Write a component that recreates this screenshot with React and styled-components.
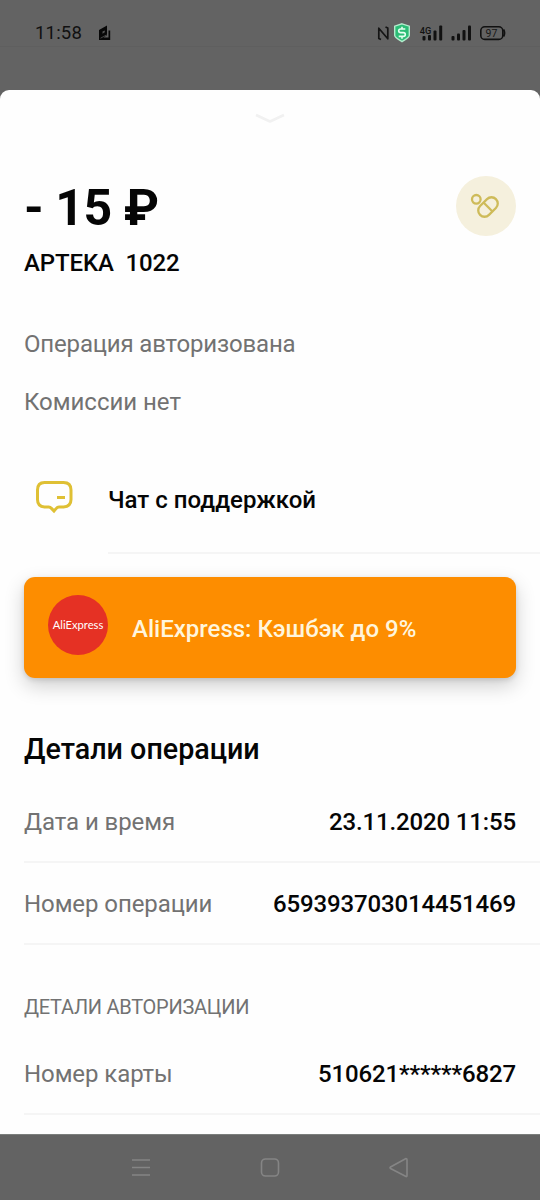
import React from "react";
import styled, { createGlobalStyle } from "styled-components";

const Global = createGlobalStyle`
  * { box-sizing: border-box; }
  body { margin: 0; background: #636363; }
`;

const Screen = styled.div`
  width: 540px;
  height: 1200px;
  display: flex;
  flex-direction: column;
  overflow: hidden;
  background: #636363;
  font-family: Roboto, "Noto Sans", sans-serif;
  color: #050505;
`;

const StatusBar = styled.header`
  height: 47px;
  margin-bottom: 43px;
  padding: 19px 34px 0 35px;
  display: flex;
  align-items: flex-start;
  justify-content: space-between;
  border-bottom: 1px solid #5f5f5f;
`;

const StatusGroup = styled.div`
  display: flex;
  align-items: center;
  height: 28px;
  gap: 16px;
`;

const Clock = styled.span`
  font-size: 18.5px;
  letter-spacing: 0.2px;
  line-height: 28px;
  color: #111;
`;

const Sheet = styled.main`
  height: 1044px;
  flex: none;
  display: flex;
  flex-direction: column;
  background: #fefefe;
  border-radius: 9px 9px 0 0;
`;

const Handle = styled.div`
  height: 86px;
  padding-top: 22px;
  display: flex;
  justify-content: center;
  align-items: flex-start;
`;

const Summary = styled.section`
  height: 152px;
  padding: 0 24px;
  display: flex;
  justify-content: space-between;
`;

const Amount = styled.h1`
  margin: 2px 0 9px;
  font-size: 50px;
  line-height: 60px;
  font-weight: 700;
  letter-spacing: -0.45px;
`;

const Merchant = styled.div`
  font-size: 24px;
  line-height: 32px;
  font-weight: 500;
  letter-spacing: -0.12px;
  white-space: pre;
`;

const CategoryBadge = styled.div`
  width: 60px;
  height: 60px;
  border-radius: 50%;
  background: #f5f0dd;
  display: flex;
  align-items: center;
  justify-content: center;
`;

const Note = styled.p`
  margin: 0 24px 26px;
  font-size: 24px;
  line-height: 32px;
  letter-spacing: ${({ $spacing }) => $spacing || 0}px;
  color: #727272;
`;

const SupportRow = styled.div`
  height: 110px;
  display: flex;
  align-items: flex-start;
`;

const SupportIcon = styled.div`
  width: 108px;
  padding: 35px 0 0 34px;
`;

const SupportLabel = styled.div`
  flex: 1;
  height: 110px;
  padding-top: 40px;
  font-size: 24px;
  line-height: 32px;
  font-weight: 500;
  border-bottom: 2px solid #f5f5f5;
`;

const Banner = styled.section`
  height: 101px;
  margin: 23.4px 24px 50.6px;
  padding: 18px 24px;
  display: flex;
  align-items: flex-start;
  gap: 24px;
  border-radius: 11px;
  background: #fd8d00;
  box-shadow: 0 8px 20px rgba(0, 0, 0, 0.19), 0 2px 5px rgba(0, 0, 0, 0.12);
`;

const BrandLogo = styled.div`
  width: 60px;
  height: 60px;
  border-radius: 50%;
  background: #e53124;
  color: #fff;
  font-family: Lato, sans-serif;
  font-size: 11.2px;
  line-height: 60px;
  text-align: center;
`;

const BannerText = styled.div`
  padding-top: 18px;
  font-size: 24px;
  line-height: 32px;
  font-weight: 500;
  color: #fff5dc;
`;

const SectionTitle = styled.h2`
  margin: 0 24px 14px;
  font-size: 28.7px;
  line-height: 40px;
  font-weight: 500;
`;

const DetailRow = styled.div`
  height: ${({ $height }) => $height}px;
  margin-left: 24px;
  padding: 0 24px 23px 0;
  display: flex;
  align-items: flex-end;
  justify-content: space-between;
  border-bottom: 2px solid #f5f5f5;
  font-size: 24px;
  line-height: 32px;
`;

const Label = styled.span`
  letter-spacing: -0.08px;
  color: #727272;
`;

const Value = styled.span`
  font-weight: 500;
  letter-spacing: -0.14px;
`;

const Caption = styled.h3`
  margin: 48px 24px 0;
  font-size: 20px;
  line-height: 28px;
  font-weight: 400;
  letter-spacing: -0.27px;
  color: #727272;
`;

const NavBar = styled.nav`
  height: 66px;
  border-top: 1px solid #7b7e7c;
  display: flex;
  align-items: center;
  justify-content: space-between;
  padding: 0 130px;
`;

const StatusIcons = () => (
  <svg width="130" height="28" viewBox="376 19 130 28" fill="none" fontFamily="Roboto, sans-serif">
    <path d="M381 39.500L378.800 38.500V28.200L387.800 38.800V28L385.500 27" stroke="#151515" strokeWidth="1.700" strokeLinejoin="round" />
    <path d="M402 23.800l7.300 2.400v9.300c0 2-4.500 4.300-7.300 6.100-2.800-1.800-7.300-4.100-7.300-6.100v-9.300z" fill="#2bbd76" stroke="#b3eccd" strokeWidth="1.400" />
    <path d="M405.300 29h-4.600q-2 0-2 1.800t2 1.800h2.600q2 0 2 1.900t-2 1.900h-4.600M402 26.800V29M402 36.400v2.300" stroke="#e4fff0" strokeWidth="1.600" />
    <text x="419.800" y="33.800" fill="#111" fontSize="9.500" fontWeight="500" textLength="11.500" lengthAdjust="spacingAndGlyphs">4G</text>
    <g fill="#111">
      <rect x="422.500" y="36" width="3" height="4.500" rx="1" />
      <rect x="428" y="35" width="3" height="5.500" rx="1" />
      <rect x="433.500" y="30.500" width="3" height="10" rx="1" />
      <rect x="439.200" y="25.500" width="3" height="15" rx="1" />
      <rect x="451.500" y="36" width="3" height="4.500" rx="1" />
      <rect x="457" y="33.500" width="3" height="7" rx="1" />
      <rect x="462.500" y="30" width="3" height="10.500" rx="1" />
      <rect x="468" y="25.500" width="3" height="15" rx="1" />
    </g>
    <rect x="480.800" y="26.800" width="22" height="12.600" rx="4" stroke="#111" strokeWidth="1.600" />
    <path d="M503.500 29.500q2 3.500 0 7" stroke="#111" strokeWidth="1.800" />
    <text x="485.600" y="36.800" fill="#181818" fontSize="10.500">97</text>
  </svg>
);

const BookIcon = () => (
  <svg width="13" height="16" viewBox="0 0 13 16">
    <path d="M1 5L9 .5v9.700L5.500 12.500h5V5.500h1.700V15H1z" fill="#080808" />
    <path d="M4.500 6.600l2.300-1.200v1.800l-2.300 1.500z" fill="#555" />
    <path d="M2.500 13.200l6-3.200" stroke="#555" strokeWidth=".8" />
  </svg>
);

export default function App() {
  return (
    <>
      <Global />
      <Screen>
        <StatusBar>
          <StatusGroup>
            <Clock>11:58</Clock>
            <BookIcon />
          </StatusGroup>
          <StatusIcons />
        </StatusBar>
        <Sheet>
          <Handle>
            <svg width="32" height="14" viewBox="0 0 32 14" fill="none">
              <path d="M2 3l14 6.500L30 3" stroke="#f1f1f1" strokeWidth="2.600" strokeLinejoin="round" />
            </svg>
          </Handle>
          <Summary>
            <div>
              <Amount>- 15 ₽</Amount>
              <Merchant>APTEKA  1022</Merchant>
            </div>
            <CategoryBadge>
              <svg width="34" height="34" viewBox="0 0 34 34" fill="none" stroke="#cebb59" strokeWidth="2.300">
                <circle cx="7.300" cy="10.300" r="4.300" />
                <g transform="rotate(-45 19 18)">
                  <rect x="7.800" y="11.700" width="22.400" height="12.600" rx="6.300" />
                  <path d="M19 11.700v12.600" />
                </g>
              </svg>
            </CategoryBadge>
          </Summary>
          <Note $spacing={-0.17}>Операция авторизована</Note>
          <Note $spacing={-0.02}>Комиссии нет</Note>
          <SupportRow>
            <SupportIcon>
              <svg width="40" height="36" viewBox="0 0 40 36" fill="none" stroke="#dfc034" strokeWidth="3">
                <path d="M10.500 3.500h19q7.500 0 7.500 7.500v9.500q0 7-7.500 7.500h-4.500q-1.600 0-2.700 1.400L20 32l-2.500-2.600Q16.300 28 14.700 28h-4.200Q3.500 27.500 3.500 20.500V11q0-7.500 7-7.500z" />
                <path d="M23 18.500h8" />
              </svg>
            </SupportIcon>
            <SupportLabel>Чат с поддержкой</SupportLabel>
          </SupportRow>
          <Banner>
            <BrandLogo>AliExpress</BrandLogo>
            <BannerText>AliExpress: Кэшбэк до 9%</BannerText>
          </Banner>
          <SectionTitle>Детали операции</SectionTitle>
          <DetailRow $height={80}>
            <Label>Дата и время</Label>
            <Value>23.11.2020 11:55</Value>
          </DetailRow>
          <DetailRow $height={82}>
            <Label>Номер операции</Label>
            <Value>659393703014451469</Value>
          </DetailRow>
          <Caption>ДЕТАЛИ АВТОРИЗАЦИИ</Caption>
          <DetailRow $height={94}>
            <Label>Номер карты</Label>
            <Value>510621******6827</Value>
          </DetailRow>
        </Sheet>
        <NavBar>
          <svg width="22" height="24" viewBox="0 0 22 24" fill="none" stroke="#858585" strokeWidth="1.600">
            <path d="M2 4h18M2 11.500h18M2 19h18" />
          </svg>
          <svg width="22" height="24" viewBox="0 0 22 24" fill="none" stroke="#858585" strokeWidth="1.600">
            <rect x="2.500" y="3" width="17" height="17" rx="4" />
          </svg>
          <svg width="22" height="24" viewBox="0 0 22 24" fill="none" stroke="#858585" strokeWidth="1.600" strokeLinejoin="round">
            <path d="M18 2.500q1 0 1 1.200v16q0 1.200-1 .8L2.500 12.500q-1-.8 0-1.500z" />
          </svg>
        </NavBar>
      </Screen>
    </>
  );
}
